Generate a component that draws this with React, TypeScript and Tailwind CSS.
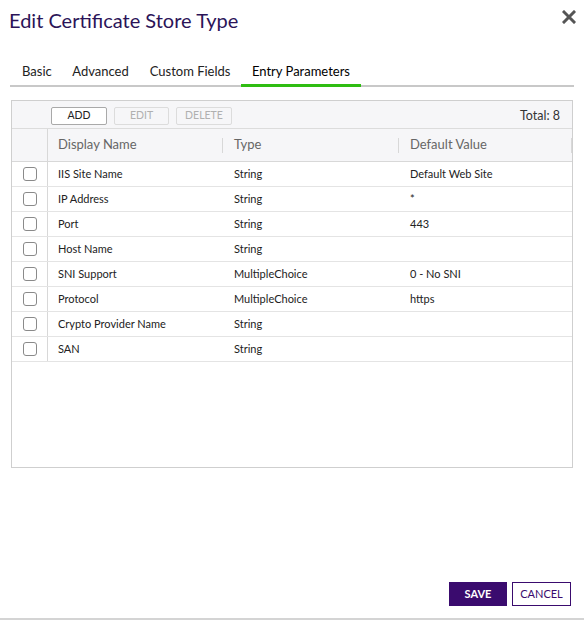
import React from 'react';

const rows = [
  { name: 'IIS Site Name', type: 'String', value: 'Default Web Site' },
  { name: 'IP Address', type: 'String', value: '*' },
  { name: 'Port', type: 'String', value: '443' },
  { name: 'Host Name', type: 'String', value: '' },
  { name: 'SNI Support', type: 'MultipleChoice', value: '0 - No SNI' },
  { name: 'Protocol', type: 'MultipleChoice', value: 'https' },
  { name: 'Crypto Provider Name', type: 'String', value: '' },
  { name: 'SAN', type: 'String', value: '' },
];

const tabs = ['Basic', 'Advanced', 'Custom Fields', 'Entry Parameters'];

const App: React.FC = () => {
  return (
    <div className="w-[584px] h-[620px] bg-white flex flex-col font-['Lato',sans-serif] text-[#222]">
      {/* Header */}
      <div className="flex items-start justify-between pl-[9px] pr-[8px] pt-[7px]">
        <h1 className="text-[20px] leading-[26px] text-[#2b1458]">Edit Certificate Store Type</h1>
        <svg width="14" height="14" viewBox="0 0 14 14" className="mt-[3px]">
          <path d="M2 2 L12 12 M12 2 L2 12" stroke="#555" strokeWidth="3" strokeLinecap="square" />
        </svg>
      </div>

      {/* Tabs */}
      <div className="mx-[10px] mt-[30px] flex border-b-2 border-[#c8c8c8] text-[13px] leading-[16px]">
        {tabs.map((t, i) => (
          <div
            key={t}
            className={
              i === 3
                ? 'px-[11px] pb-[5px] border-b-[3px] border-[#2fbd12] mb-[-2px] text-black'
                : i === 0
                  ? 'pl-[12px] pr-[10px] pb-[6px] text-[#222]'
                  : 'px-[10.5px] pb-[6px] text-[#222]'
            }
          >
            {t}
          </div>
        ))}
      </div>

      {/* Grid */}
      <div className="mx-[11px] mt-[13px] h-[368px] border border-[#cfcfcf] flex flex-col">
        <div className="h-[28px] bg-[#f6f6f8] border-b border-[#dcdcdc] flex items-center pt-[3px] pl-[39px] pr-[12px] gap-[7px]">
          <button className="w-[56px] h-[18px] border border-[#a9a9a9] rounded-[2px] bg-white text-[10.5px] text-[#222] flex items-center justify-center">
            ADD
          </button>
          <button className="w-[55px] h-[18px] border border-[#dcdcdc] rounded-[2px] bg-[#f6f6f8] text-[10.5px] text-[#b0b0b0] flex items-center justify-center">
            EDIT
          </button>
          <button className="w-[56px] h-[18px] border border-[#dcdcdc] rounded-[2px] bg-[#f6f6f8] text-[10.5px] text-[#b0b0b0] flex items-center justify-center">
            DELETE
          </button>
          <span className="ml-auto text-[12.5px] text-[#333]">Total: 8</span>
        </div>

        <div className="h-[33px] bg-[#f6f6f8] border-b border-[#d8d8d8] flex text-[13px] text-[#666]">
          <div className="w-[36px] border-r border-[#d8d8d8]" />
          <div className="w-[175px] flex items-center pl-[10px] relative">
            Display Name
            <div className="absolute right-0 top-[9px] h-[15px] border-r border-[#d8d8d8]" />
          </div>
          <div className="w-[176px] flex items-center pl-[11px] relative">
            Type
            <div className="absolute right-0 top-[9px] h-[15px] border-r border-[#d8d8d8]" />
          </div>
          <div className="flex-1 flex items-center pl-[11px] relative">
            Default Value
            <div className="absolute right-0 top-[9px] h-[15px] border-r border-[#d8d8d8]" />
          </div>
        </div>

        {rows.map((r) => (
          <div key={r.name} className="h-[25px] border-b border-[#e4e4e4] flex text-[11px] text-[#222]">
            <div className="w-[36px] border-r border-[#d8d8d8] flex items-center justify-center">
              <div className="w-[14px] h-[14px] rounded-[3px] border border-[#8a8a8a] bg-white" />
            </div>
            <div className="w-[175px] flex items-center pl-[10px]">{r.name}</div>
            <div className="w-[176px] flex items-center pl-[11px]">{r.type}</div>
            <div className="flex-1 flex items-center pl-[11px]">{r.value}</div>
          </div>
        ))}
      </div>

      {/* Footer */}
      <div className="mt-auto flex justify-end gap-[5px] pr-[13px] pb-[12px]">
        <button className="w-[58px] h-[24px] bg-[#3a0b6e] text-white text-[11px] font-bold">SAVE</button>
        <button className="w-[59px] h-[24px] border border-[#3a0b6e] bg-white text-[#3a0b6e] text-[11px]">
          CANCEL
        </button>
      </div>
      <div className="h-[2px] bg-[#d4d4d4]" />
    </div>
  );
};

export default App;
